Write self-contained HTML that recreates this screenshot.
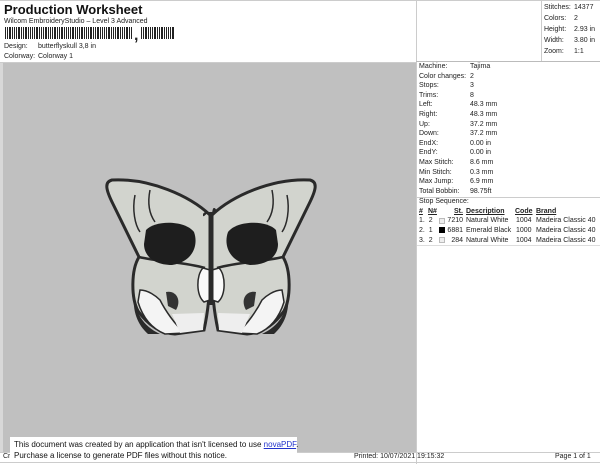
<!DOCTYPE html>
<html><head><meta charset="utf-8"><style>
*{margin:0;padding:0;box-sizing:border-box}
body{width:600px;height:464px;background:#fff;position:relative;overflow:hidden;font-family:"Liberation Sans",sans-serif;color:#222}
.a{position:absolute;white-space:nowrap}
.s{font-size:7px;line-height:9.6px}
.gray{position:absolute;left:3px;top:63px;width:413px;height:390px;background:#c0c0c0}
u{text-decoration:underline}
</style></head><body>
<div style="position:absolute;left:0;top:0;width:600px;height:1px;background:#ccc"></div>
<div class="a" style="left:4px;top:2px;font-size:13px;font-weight:bold;color:#111">Production Worksheet</div>
<div class="a s" style="left:4px;top:17px">Wilcom EmbroideryStudio – Level 3 Advanced</div>
<svg class="a" style="left:0;top:26px" width="180" height="18">
<g fill="#222" id="bc"></g>
<text x="134" y="14" font-size="16" font-weight="bold" fill="#222" font-family="Liberation Sans">,</text>
</svg>
<div class="a s" style="left:4px;top:42px">Design:</div><div class="a s" style="left:38px;top:42px">butterflyskull 3,8 in</div>
<div class="a s" style="left:4px;top:52px">Colorway:</div><div class="a s" style="left:38px;top:52px">Colorway 1</div>
<div style="position:absolute;left:0;top:62px;width:417px;height:1px;background:#ccc"></div>
<div class="gray"></div>
<div style="position:absolute;left:0;top:63px;width:3px;height:390px;background:#d8d8d8"></div>
<div style="position:absolute;left:416px;top:0;width:1px;height:464px;background:#ccc"></div>
<div style="position:absolute;left:541px;top:0;width:1px;height:62px;background:#ccc"></div>
<div style="position:absolute;left:416px;top:61px;width:184px;height:1px;background:#bbb"></div>
<div class="a s" style="left:544px;top:2px;line-height:11px">Stitches:<br>Colors:<br>Height:<br>Width:<br>Zoom:</div>
<div class="a s" style="left:574px;top:2px;line-height:11px">14377<br>2<br>2.93 in<br>3.80 in<br>1:1</div>
<div class="a s" style="left:419px;top:62px;line-height:9.6px">Machine:<br>Color changes:<br>Stops:<br>Trims:<br>Left:<br>Right:<br>Up:<br>Down:<br>EndX:<br>EndY:<br>Max Stitch:<br>Min Stitch:<br>Max Jump:<br>Total Bobbin:</div>
<div class="a s" style="left:470px;top:62px;line-height:9.6px">Tajima<br>2<br>3<br>8<br>48.3 mm<br>48.3 mm<br>37.2 mm<br>37.2 mm<br>0.00 in<br>0.00 in<br>8.6 mm<br>0.3 mm<br>6.9 mm<br>98.75ft</div>
<div style="position:absolute;left:417px;top:197px;width:183px;height:1px;background:#ccc"></div>
<div class="a s" style="left:419px;top:197px">Stop Sequence:</div>
<div class="a s" style="left:419px;top:207px;font-weight:bold"><u>#</u></div>
<div class="a s" style="left:428px;top:207px;font-weight:bold"><u>N#</u></div>
<div class="a s" style="left:454px;top:207px;font-weight:bold"><u>St.</u></div>
<div class="a s" style="left:466px;top:207px;font-weight:bold"><u>Description</u></div>
<div class="a s" style="left:515px;top:207px;font-weight:bold"><u>Code</u></div>
<div class="a s" style="left:536px;top:207px;font-weight:bold"><u>Brand</u></div>
<div class="a s" style="left:419px;top:216px;line-height:9.8px">1.&nbsp;&nbsp;2<br>2.&nbsp;&nbsp;1<br>3.&nbsp;&nbsp;2</div>
<div style="position:absolute;left:439px;top:218px;width:6px;height:6px;border:1px solid #bbb;background:#eee"></div>
<div style="position:absolute;left:439px;top:227px;width:6px;height:6px;background:#000"></div>
<div class="a" style="left:439px;top:237px;width:6px;height:6px;border:1px solid #bbb;background:#eee"></div>
<div class="a s" style="left:446px;top:216px;line-height:9.8px;text-align:right;width:17px">7210<br>6881<br>284</div>
<div class="a s" style="left:466px;top:216px;line-height:9.8px">Natural White<br>Emerald Black<br>Natural White</div>
<div class="a s" style="left:516px;top:216px;line-height:9.8px">1004<br>1000<br>1004</div>
<div class="a s" style="left:536px;top:216px;line-height:9.8px">Madeira Classic 40<br>Madeira Classic 40<br>Madeira Classic 40</div>
<div style="position:absolute;left:417px;top:245px;width:183px;height:1px;background:#ddd"></div>
<div style="position:absolute;left:0;top:452px;width:600px;height:1px;background:#ccc"></div>
<div style="position:absolute;left:0;top:462px;width:600px;height:1px;background:#ccc"></div>
<div class="a s" style="left:3px;top:452px">Cr</div>
<div class="a s" style="left:354px;top:452px">Printed: 10/07/2021 19:15:32</div>
<div class="a s" style="left:555px;top:452px">Page 1 of 1</div>
<div style="position:absolute;left:10px;top:437px;width:287px;height:25px;background:#fff"></div>
<div class="a" style="left:14px;top:439px;font-size:8px;line-height:11px;color:#111">This document was created by an application that isn't licensed to use <span style="color:#2233cc;text-decoration:underline">novaPDF</span>.<br>Purchase a license to generate PDF files without this notice.</div>
<svg class="a" style="left:0;top:0" width="420" height="464">
<defs>
<g id="w">
<path d="M210,215 C190,196 150,178 112,180 C104,182 106,190 113,204 L139,257 C131,270 131,298 138,311 C148,325 160,333 175,334 L204,330 C208,312 210,292 210,270 Z" fill="#d2d4ce" stroke="#2a2a2a" stroke-width="3"/>
<path d="M139,257 C160,262 185,262 205,268" fill="none" stroke="#2a2a2a" stroke-width="2.5"/>
<path d="M146,230 C155,220 185,220 194,232 C199,246 192,262 172,265 C154,265 144,256 144,244 Z" fill="#1e1e1e"/>
<path d="M140,290 C148,290 156,296 160,300 C165,310 175,325 185,333 L165,334 C150,328 142,315 138,302 Z" fill="#f4f4f4" stroke="#2a2a2a" stroke-width="1.5"/>
<path d="M134,292 C134,312 143,326 160,334 L148,334 C138,325 132,312 134,292 Z" fill="#2a2a2a"/>
<path d="M166,292 C176,290 182,300 176,310 L168,306 Z" fill="#333"/>
<path d="M172,314 L204,313 L203,330 L180,333 Z" fill="#eee"/>
<path d="M135,195 C132,210 135,225 140,232 M150,190 C147,205 150,215 155,222" fill="none" stroke="#2a2a2a" stroke-width="1.5"/>
</g>
</defs>
<use href="#w"/>
<use href="#w" transform="translate(422,0) scale(-1,1)"/>
<path d="M203,268 C196,275 196,295 204,302 L210,300 L210,270 Z M219,268 C226,275 226,295 218,302 L212,300 L212,270 Z" fill="#fafafa" stroke="#2a2a2a" stroke-width="1.5"/>
<path d="M211,212 L211,305" stroke="#2a2a2a" stroke-width="5"/>
<path d="M209,214 C206,210 205,215 203,215 M213,214 C215,206 213,210 217,212" fill="none" stroke="#2a2a2a" stroke-width="2.5"/>
</svg>
<script>
var g=document.getElementById('bc'),p=[1,1,2,1,1,1,2,1,1,2,1,1,1,1,2,1];
function run(x0,x1){var x=x0,i=0;while(x<x1){var w=p[i%p.length];var r=document.createElementNS('http://www.w3.org/2000/svg','rect');r.setAttribute('x',x);r.setAttribute('y',1);r.setAttribute('width',w);r.setAttribute('height',12);g.appendChild(r);x+=w+1;i++;}}
run(5,133);run(141,175);
</script>
</body></html>
